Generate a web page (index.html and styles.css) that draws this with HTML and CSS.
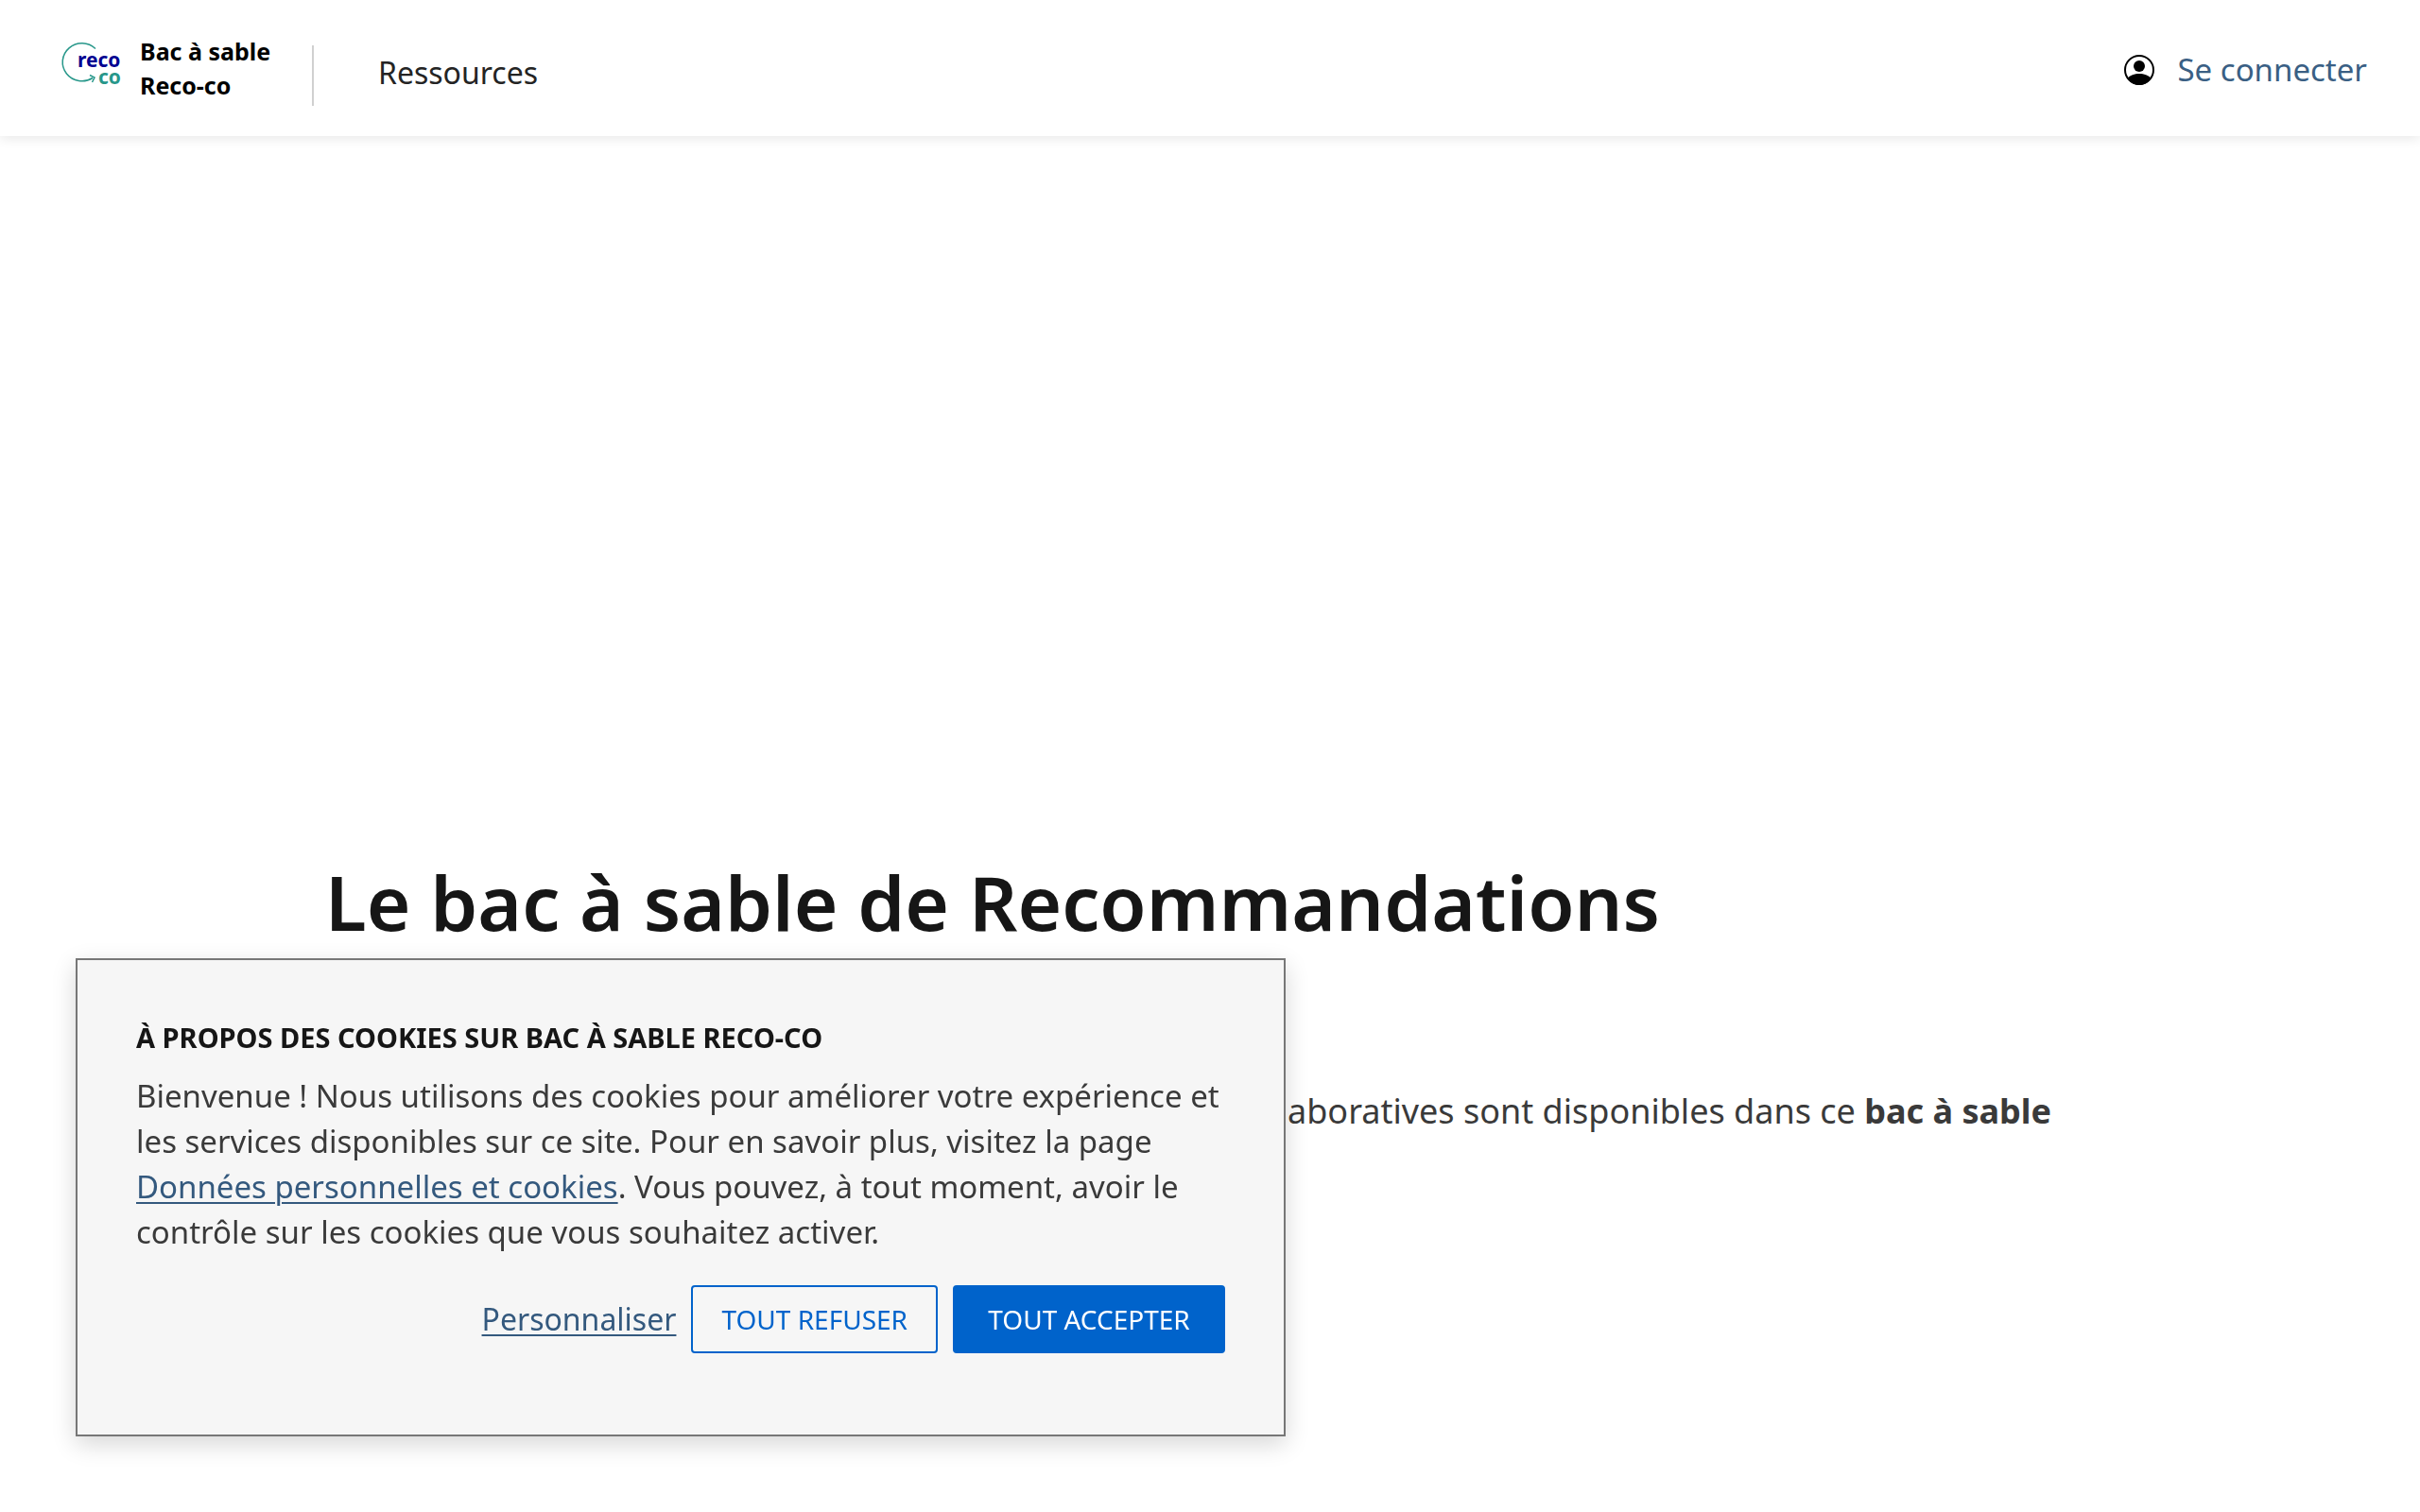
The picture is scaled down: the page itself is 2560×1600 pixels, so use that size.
FILE: index.html
```html
<!DOCTYPE html>
<html lang="fr">
<head>
<meta charset="utf-8">
<meta name="viewport" content="width=device-width, initial-scale=1">
<title>Bac à sable Reco-co</title>
<link rel="stylesheet" href="styles.css">
</head>
<body>
<header class="header">
  <a class="brand" href="#">
    <svg class="brand-logo" viewBox="0 0 68 50" role="img" aria-label="Reco-co">
      <path d="M35 8.500A20.500 20 0 1 0 32 39.500" fill="none" stroke="#27978a" stroke-width="1.500"/>
      <path d="M29 36.500L34 39L31.500 44" fill="none" stroke="#27978a" stroke-width="1.500"/>
      <text class="logo-text logo-reco" x="16" y="28">reco</text>
      <text class="logo-text logo-co" x="38" y="46">co</text>
    </svg>
    <span class="brand-name">Bac à sable<br>Reco-co</span>
  </a>
  <nav class="nav">
    <a class="nav-link" href="#">Ressources</a>
  </nav>
  <a class="login" href="#">
    <svg class="login-icon" viewBox="0 0 32 32" aria-hidden="true">
      <circle cx="16" cy="16" r="15" fill="none" stroke="#000" stroke-width="2"/>
      <circle cx="16" cy="12" r="6"/>
      <path d="M3.500 25C6 21.500 11 20 16 20S26 21.500 28.500 25C26 29.500 21 32 16 32S6 29.500 3.500 25Z"/>
    </svg>
    <span>Se connecter</span>
  </a>
</header>
<main class="main">
  <h1 class="title">Le bac à sable de Recommandations</h1>
  <p class="intro">collaboratives sont disponibles dans ce <strong>bac à sable</strong></p>
</main>
<section class="cookies" role="dialog" aria-labelledby="cookies-title">
  <h2 class="cookies-title" id="cookies-title">À propos des cookies sur Bac à sable Reco-co</h2>
  <p class="cookies-text">Bienvenue ! Nous utilisons des cookies pour améliorer votre expérience et les services disponibles sur ce site. Pour en savoir plus, visitez la page <a class="link" href="#">Données personnelles et cookies</a>. Vous pouvez, à tout moment, avoir le contrôle sur les cookies que vous souhaitez activer.</p>
  <div class="actions">
    <a class="link" href="#">Personnaliser</a>
    <button class="button" type="button">Tout refuser</button>
    <button class="button button-primary" type="button">Tout accepter</button>
  </div>
</section>
</body>
</html>
```
FILE: styles.css
```css
* {
  box-sizing: border-box;
}

body {
  margin: 0;
  background: #fff;
  color: #3a3a3a;
  font-family: "Noto Sans", sans-serif;
  font-size: 32px;
  line-height: 48px;
}

h1, h2, p {
  margin: 0;
}

.header {
  display: flex;
  align-items: center;
  height: 144px;
  padding: 0 56px 0 66px;
  box-shadow: 0 2px 12px rgba(0, 0, 0, 0.1);
}

.brand {
  display: flex;
  align-items: center;
  gap: 14px;
  color: #000;
  text-decoration: none;
}

.brand-logo {
  width: 68px;
  height: 50px;
  margin-bottom: 8px;
  overflow: visible;
}

.logo-text {
  font-size: 21px;
  font-weight: 700;
}

.logo-reco {
  fill: #000091;
}

.logo-co {
  fill: #27978a;
}

.brand-name {
  width: 182px;
  font-size: 25px;
  font-weight: 700;
  line-height: 36px;
}

.nav {
  display: flex;
  align-items: center;
  height: 64px;
  margin-top: 16px;
  padding-left: 68px;
  border-left: 2px solid #d0d0d0;
}

.nav-link {
  padding-bottom: 6px;
  color: #242424;
  text-decoration: none;
}

.login {
  display: flex;
  align-items: center;
  gap: 24px;
  margin-top: 4px;
  margin-left: auto;
  color: #3a5f84;
  font-size: 33px;
  text-decoration: none;
}

.login-icon {
  width: 32px;
  height: 32px;
}

.main {
  padding: 758px 344px 0;
}

.title {
  color: #161616;
  font-size: 80px;
  font-weight: 600;
  line-height: 104px;
}

.intro {
  padding-top: 138px;
  padding-right: 46px;
  font-size: 36px;
  line-height: 64px;
  text-align: right;
}

.cookies {
  position: fixed;
  bottom: 80px;
  left: 80px;
  width: 50%;
  padding: 62px 62px 86px;
  border: 2px solid #777;
  background: #f6f6f6;
  box-shadow: 0 8px 24px rgba(0, 0, 0, 0.16);
}

.cookies-title {
  margin-bottom: 18px;
  color: #161616;
  font-size: 29px;
  font-weight: 700;
  line-height: 40px;
  text-transform: uppercase;
}

.cookies-text {
  font-size: 33px;
}

.link {
  color: #34597e;
  text-decoration: underline;
  text-decoration-thickness: 2px;
  text-underline-offset: 4px;
}

.actions {
  display: flex;
  align-items: center;
  justify-content: flex-end;
  gap: 16px;
  margin-top: 32px;
}

.button {
  height: 72px;
  padding: 0 30px;
  border: 2px solid #0063cb;
  border-radius: 4px;
  background: transparent;
  color: #0063cb;
  font: inherit;
  font-size: 28px;
  text-transform: uppercase;
}

.button-primary {
  min-width: 288px;
  background: #0063cb;
  color: #fff;
}
```
